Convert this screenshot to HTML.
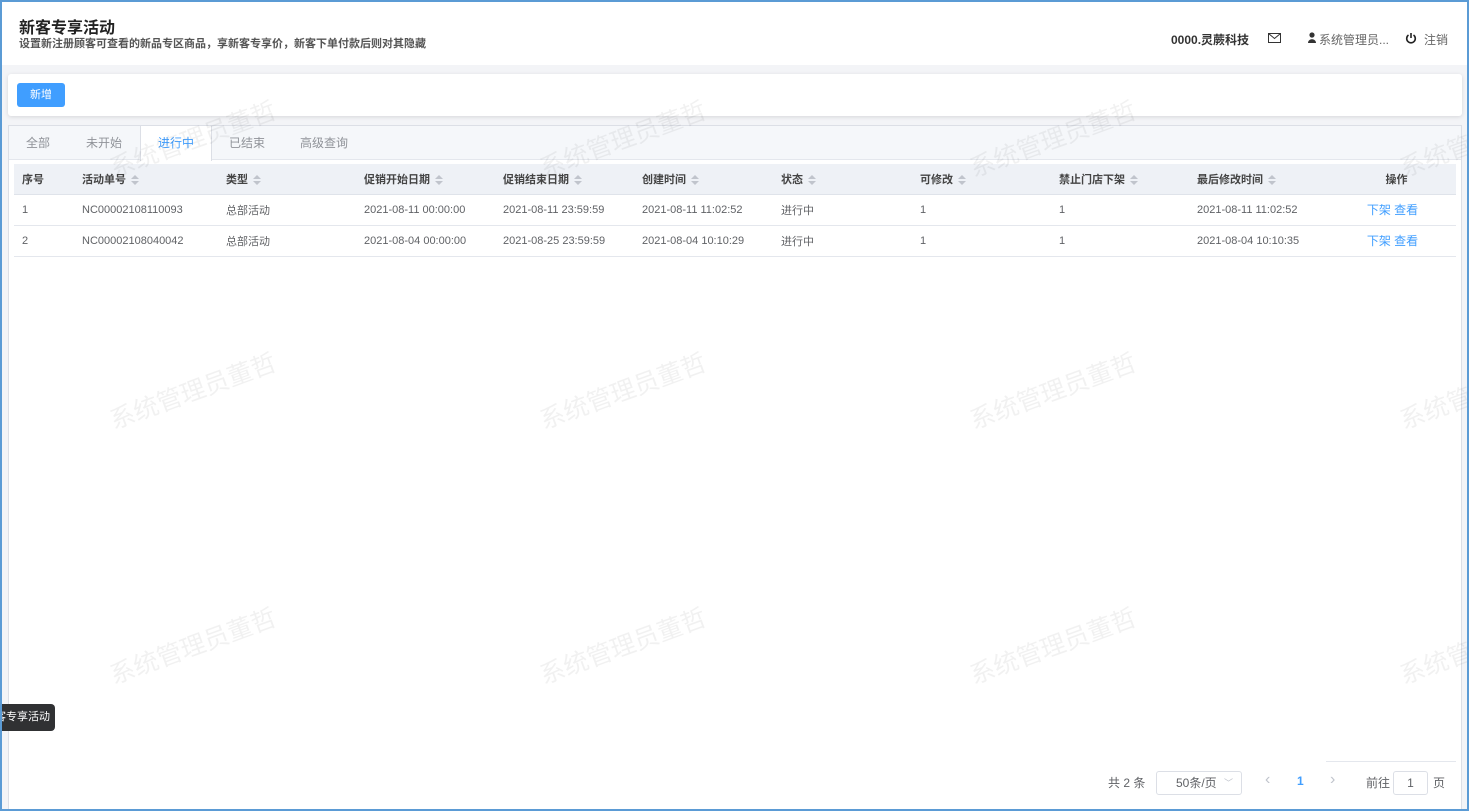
<!DOCTYPE html>
<html><head><meta charset="utf-8"><style>
*{margin:0;padding:0;box-sizing:border-box}
body{width:1469px;height:811px;overflow:hidden;font-family:"Liberation Sans","Noto Sans CJK SC",sans-serif;background:#5b9bd5;position:relative}
.frame{position:absolute;left:2px;top:2px;width:1465px;height:807px;background:#f3f4f7;overflow:hidden}
.hdr{position:absolute;left:0;top:0;width:100%;height:63px;background:#fff}
.t1{position:absolute;left:17px;top:12px;font-size:16px;font-weight:bold;color:#222}
.t2{position:absolute;left:17px;top:33px;font-size:11px;font-weight:bold;color:#555}
.hr{position:absolute;top:29px;font-size:12px;color:#333}
.card{position:absolute;left:6px;top:72px;width:1454px;height:42px;background:#fff;border-radius:3px;box-shadow:0 1px 4px rgba(0,0,0,.12)}
.btn{position:absolute;left:9px;top:9px;width:48px;height:24px;background:#409eff;border-radius:3px;color:#fff;font-size:11px;text-align:center;line-height:24px}
.panel{position:absolute;left:6px;top:123px;width:1454px;height:690px;background:#fff;border:1px solid #dcdfe6}
.tabs{position:absolute;left:0;top:0;width:100%;height:34px;background:#f5f7fa;border-bottom:1px solid #e4e7ed}
.tab{position:absolute;top:0;height:34px;line-height:34px;font-size:12px;color:#909399}
.tab.on{background:#fff;color:#409eff;border-left:1px solid #dcdfe6;border-right:1px solid #dcdfe6;height:35px;text-align:center}
table{position:absolute;left:5px;top:38px;width:1442px;border-collapse:collapse;font-size:11px;color:#606266;table-layout:fixed}
th{height:30px;background:#eef1f6;text-align:left;font-weight:bold;color:#444;padding-left:8px;border-bottom:1px solid #dfe3ea}
td{height:31px;padding-left:8px;border-bottom:1px solid #e4e7ed}
.s{display:inline-block;width:8px;height:10px;vertical-align:middle;margin-left:5px;position:relative}
.s:before,.s:after{content:"";position:absolute;left:0;border-left:4px solid transparent;border-right:4px solid transparent}
.s:before{top:0;border-bottom:4px solid #c0c4cc}.s:after{bottom:0;border-top:4px solid #c0c4cc}
.a{color:#409eff}
.wm{position:absolute;font-size:25px;color:rgba(0,0,0,.055);transform:rotate(-20deg);white-space:nowrap;pointer-events:none}
.pg{position:absolute;top:772px;font-size:12px;color:#606266}
.tip{position:absolute;left:-2px;top:702px;width:55px;height:27px;background:#303133;color:#fff;font-size:11px;line-height:27px;border-radius:0 4px 4px 0;overflow:hidden;white-space:nowrap;text-indent:-5px}
</style></head><body><div class="frame">
<div class="hdr">
<div class="t1">新客专享活动</div>
<div class="t2">设置新注册顾客可查看的新品专区商品，享新客专享价，新客下单付款后则对其隐藏</div>
<div class="hr" style="left:1169px;font-weight:bold">0000.灵蕨科技</div>
<svg style="position:absolute;left:1266px;top:31px" width="13" height="10" viewBox="0 0 13 10"><rect x=".5" y=".5" width="12" height="9" fill="none" stroke="#333"/><path d="M.5 .5L6.5 5.5L12.5 .5" fill="none" stroke="#333"/></svg>
<svg style="position:absolute;left:1306px;top:30px" width="8" height="11" viewBox="0 0 8 11"><circle cx="4" cy="3" r="2.6" fill="#333"/><path d="M0 11C0 6 8 6 8 11Z" fill="#333"/></svg>
<div class="hr" style="left:1317px;color:#666">系统管理员...</div>
<svg style="position:absolute;left:1403px;top:30px" width="12" height="12" viewBox="0 0 12 12"><path d="M3.5 3A4.3 4.3 0 1 0 8.5 3" fill="none" stroke="#222" stroke-width="1.6"/><path d="M6 1V6" stroke="#222" stroke-width="1.6"/></svg>
<div class="hr" style="left:1422px;color:#666">注销</div>
</div>
<div class="card"><div class="btn">新增</div></div>
<div class="panel">
<div class="tabs">
<div class="tab" style="left:17px">全部</div>
<div class="tab" style="left:77px">未开始</div>
<div class="tab on" style="left:131px;width:72px">进行中</div>
<div class="tab" style="left:220px">已结束</div>
<div class="tab" style="left:291px">高级查询</div>
</div>
<table>
<colgroup><col style="width:60px"><col style="width:144px"><col style="width:138px"><col style="width:139px"><col style="width:139px"><col style="width:139px"><col style="width:139px"><col style="width:139px"><col style="width:138px"><col style="width:138px"><col></colgroup>
<tr><th>序号</th><th>活动单号<i class="s"></i></th><th>类型<i class="s"></i></th><th>促销开始日期<i class="s"></i></th><th>促销结束日期<i class="s"></i></th><th>创建时间<i class="s"></i></th><th>状态<i class="s"></i></th><th>可修改<i class="s"></i></th><th>禁止门店下架<i class="s"></i></th><th>最后修改时间<i class="s"></i></th><th style="text-align:center;padding:0 0 0 10px">操作</th></tr>
<tr><td>1</td><td>NC00002108110093</td><td>总部活动</td><td>2021-08-11 00:00:00</td><td>2021-08-11 23:59:59</td><td>2021-08-11 11:02:52</td><td>进行中</td><td>1</td><td>1</td><td>2021-08-11 11:02:52</td><td style="text-align:center;padding:0 0 0 2px"><span class="a" style="font-size:12px">下架 查看</span></td></tr>
<tr><td>2</td><td>NC00002108040042</td><td>总部活动</td><td>2021-08-04 00:00:00</td><td>2021-08-25 23:59:59</td><td>2021-08-04 10:10:29</td><td>进行中</td><td>1</td><td>1</td><td>2021-08-04 10:10:35</td><td style="text-align:center;padding:0 0 0 2px"><span class="a" style="font-size:12px">下架 查看</span></td></tr>
</table>
</div>
<div style="position:absolute;left:1324px;top:759px;width:130px;height:1px;background:#e4e7ed"></div>
<div class="pg" style="left:1106px">共 2 条</div>
<div style="position:absolute;left:1154px;top:769px;width:86px;height:24px;border:1px solid #dcdfe6;border-radius:3px;font-size:12px;color:#606266;line-height:22px;padding-left:19px">50条/页<span style="position:absolute;right:8px;color:#c0c4cc;font-size:9px">﹀</span></div>
<div class="pg" style="left:1263px;color:#c0c4cc;font-size:16px;top:769px">‹</div>
<div class="pg" style="left:1295px;color:#409eff;font-weight:bold">1</div>
<div class="pg" style="left:1328px;color:#c0c4cc;font-size:16px;top:769px">›</div>
<div class="pg" style="left:1364px">前往</div>
<div style="position:absolute;left:1391px;top:769px;width:35px;height:24px;border:1px solid #dcdfe6;border-radius:3px;font-size:12px;color:#606266;line-height:22px;text-align:center">1</div>
<div class="pg" style="left:1431px">页</div>
<div class="tip">客专享活动</div>
<div class="wm" style="left:103px;top:118px">系统管理员董哲</div>
<div class="wm" style="left:533px;top:118px">系统管理员董哲</div>
<div class="wm" style="left:963px;top:118px">系统管理员董哲</div>
<div class="wm" style="left:1393px;top:118px">系统管理员董哲</div>
<div class="wm" style="left:103px;top:370px">系统管理员董哲</div>
<div class="wm" style="left:533px;top:370px">系统管理员董哲</div>
<div class="wm" style="left:963px;top:370px">系统管理员董哲</div>
<div class="wm" style="left:1393px;top:370px">系统管理员董哲</div>
<div class="wm" style="left:103px;top:625px">系统管理员董哲</div>
<div class="wm" style="left:533px;top:625px">系统管理员董哲</div>
<div class="wm" style="left:963px;top:625px">系统管理员董哲</div>
<div class="wm" style="left:1393px;top:625px">系统管理员董哲</div>
</div></body></html>
